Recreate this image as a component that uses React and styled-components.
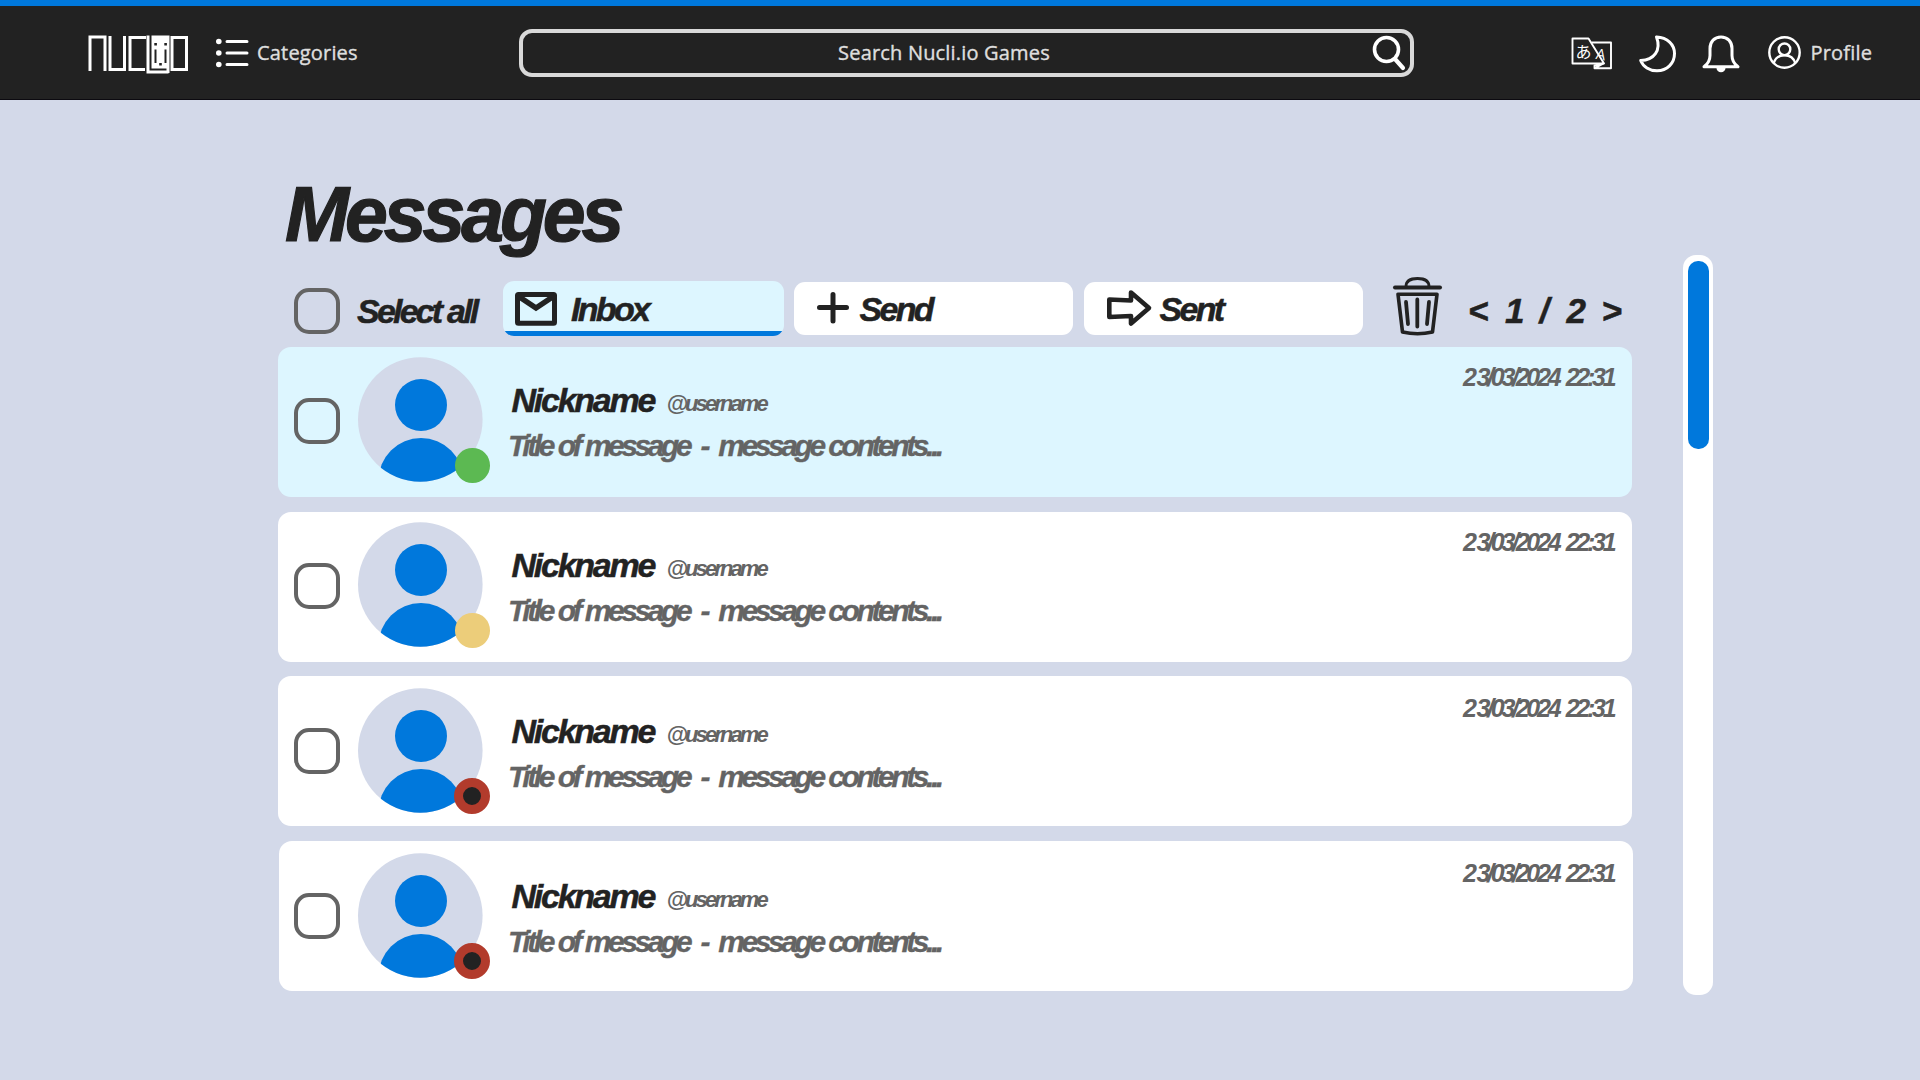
import React from "react";
import styled, { createGlobalStyle } from "styled-components";

const ink = "#222222";
const grey = "#646464";
const blue = "#0078dc";
const haze = "#d3d9e9";
const ice = "#ddf6ff";

const GlobalStyle = createGlobalStyle`
  * { box-sizing: border-box; }
  body { margin: 0; background: ${haze}; overflow: hidden; }
`;

const Page = styled.div`
  width: 1920px;
  height: 1080px;
  background: ${haze};
  font-family: "Liberation Sans", Arial, sans-serif;
  font-weight: 700;
  font-style: italic;
  color: ${ink};
`;

const Header = styled.header`
  height: 100px;
  border-top: 6px solid ${blue};
  border-bottom: 1px solid #0c0a10;
  background: ${ink};
  display: flex;
  align-items: flex-start;
  padding: 23px 0 0 88px;
  font-family: "Open Sans", "Noto Sans", sans-serif;
  font-weight: 500;
  font-style: normal;
  font-size: 20px;
  line-height: 48px;
  letter-spacing: 0.18px;
  -webkit-text-stroke: 0.4px #dedede;
  color: #dedede;
`;

const Icon = styled.svg`
  display: block;
  flex: none;
  overflow: visible;
  width: ${(p) => p.$w}px;
  height: ${(p) => p.$h}px;
  margin-top: ${(p) => p.$top || 0}px;
`;

const NavLink = styled.a`
  display: flex;
  gap: ${(p) => p.$gap}px;
  margin-left: ${(p) => p.$left}px;
  width: ${(p) => p.$w}px;
  white-space: nowrap;
`;

const SearchBox = styled.div`
  width: 895px;
  height: 48px;
  margin-left: 154px;
  border: 4px solid #d9d9d9;
  border-radius: 13px;
  display: flex;
  line-height: 40px;
`;

const SearchText = styled.span`
  flex: 1;
  text-align: center;
  padding-right: 8px;
`;

const HeaderTools = styled.div`
  display: flex;
  margin-left: 157px;
`;

const Body = styled.div`
  display: flex;
  padding-left: 278px;
`;

const Main = styled.main`
  width: 1355px;
`;

const Title = styled.h1`
  margin: 74px 0 0 7px;
  font-size: 77px;
  line-height: 80px;
  letter-spacing: -4.1px;
  -webkit-text-stroke: 1.2px ${ink};
`;

const Toolbar = styled.div`
  display: flex;
  align-items: flex-start;
  height: 71px;
  margin-top: 22px;
  padding-left: 16px;
  font-size: 34px;
  line-height: 36px;
  letter-spacing: -2.7px;
  -webkit-text-stroke: 0.5px ${ink};
  white-space: nowrap;
`;

const Checkbox = styled.span`
  flex: none;
  width: 46px;
  height: 46px;
  margin-top: ${(p) => p.$top}px;
  border: 4px solid ${grey};
  border-radius: 15px;
`;

const SelectLabel = styled.span`
  width: 146px;
  margin: 17px 0 0 17px;
  letter-spacing: -2.8px;
`;

const Tabs = styled.nav`
  display: grid;
  grid-template-columns: 281px 280px 279px;
  column-gap: 10px;
  align-items: start;
`;

const Tab = styled.div`
  display: flex;
  width: ${(p) => (p.$active ? 281 : 279)}px;
  margin-top: ${(p) => (p.$active ? 5 : 6)}px;
  height: ${(p) => (p.$active ? 55 : 53)}px;
  padding-left: ${(p) => p.$pad}px;
  padding-top: ${(p) => (p.$active ? 10 : 9)}px;
  gap: ${(p) => p.$gap}px;
  border-radius: 11px;
  background: ${(p) =>
    p.$active ? `linear-gradient(${ice} 50px, ${blue} 50px)` : "#fff"};
`;

const Pager = styled.div`
  display: grid;
  grid-template-columns: 37px 34.5px 27px 35px 20px;
  margin: 17px 0 0 26px;
  font-size: 35px;
  line-height: 36px;
  letter-spacing: 0;
`;

const List = styled.section`
  display: flex;
  flex-direction: column;
  gap: 14.67px;
`;

const Card = styled.article`
  display: flex;
  align-items: flex-start;
  width: 1354px;
  height: 150px;
  margin-left: ${(p) => p.$nudge}px;
  padding-left: ${(p) => 16 - p.$nudge}px;
  padding-right: ${(p) => p.$nudge}px;
  padding-top: ${(p) => p.$drop}px;
  border-radius: 13px;
  background: ${(p) => (p.$selected ? ice : "#fff")};
`;

const Avatar = styled.div`
  position: relative;
  flex: none;
  width: 125px;
  height: 125px;
  margin: 10px 0 0 18px;
`;

const Status = styled.span`
  position: absolute;
  left: ${(p) => (p.$busy ? 96.4 : 97)}px;
  top: ${(p) => (p.$busy ? 90 : 91)}px;
  width: ${(p) => (p.$busy ? 36 : 34.5)}px;
  height: ${(p) => (p.$busy ? 36 : 34.5)}px;
  border-radius: 50%;
  border: ${(p) => (p.$busy ? "9px solid #b23b2c" : "none")};
  background: ${(p) => p.$color};
`;

const Content = styled.div`
  flex: 1;
  padding: 35px 0 0 25px;
  white-space: pre;
`;

const NameRow = styled.div`
  display: flex;
  align-items: baseline;
  padding-left: 3.5px;
`;

const Nickname = styled.span`
  width: 155px;
  font-size: 34px;
  line-height: 36px;
  letter-spacing: -2.25px;
  -webkit-text-stroke: 0.5px ${ink};
`;

const Username = styled.span`
  font-size: 22px;
  line-height: 30px;
  letter-spacing: -2.9px;
  color: ${grey};
  position: relative;
  top: -1px;
`;

const Preview = styled.p`
  margin: 9px 0 0;
  font-size: 30px;
  line-height: 33px;
  letter-spacing: -3.42px;
  word-spacing: 0.7px;
  -webkit-text-stroke: 0.3px ${grey};
  color: ${grey};
`;

const Stamp = styled.time`
  width: 169px;
  padding-top: 17px;
  font-size: 25px;
  line-height: 26px;
  letter-spacing: -3.26px;
  color: ${grey};
  white-space: pre;
`;

const FirstDigit = styled.span`
  letter-spacing: -0.5px;
`;

const ScrollTrack = styled.div`
  width: 30px;
  height: 740px;
  margin: 155px 0 0 50px;
  padding: 5.5px 4.5px;
  border-radius: 13px;
  background: #fff;
`;

const ScrollThumb = styled.div`
  height: 188.5px;
  border-radius: 10px;
  background: ${blue};
`;

const Logo = () => (
  <Icon $w={100} $h={39} $top={6} viewBox="88 35 100 39" fill="none" stroke="#fff" strokeWidth="3">
    <path d="M90 71V37H105V71" />
    <path d="M110 36V69.5H124.500V36" />
    <path d="M146 37.500H130V69.500H145" />
    <path d="M148 35.500V72H168.500" />
    <path d="M151.500 35.500H169.500V73H166.500V68.500H151.500Z" fill="#fff" stroke="none" />
    <path d="M172 37.500H186.500V69.500H172Z" />
    <path d="M155.500 49.500V63M165.500 49.500V63" stroke="#222" strokeWidth="2" />
    <path d="M154.300 43h2.600v2.600h-2.600zM164.300 43h2.600v2.600h-2.600zM159.200 63h2.600v2.600h-2.600z" fill="#222" stroke="none" />
  </Icon>
);

const ListIcon = () => (
  <Icon $w={33} $h={30} $top={9} viewBox="216 38 33 30" stroke="#fff" strokeWidth="3" strokeLinecap="round">
    <path d="M227 41.500H247M227 53H247M227 64.500H247" />
    <g fill="#fff" stroke="none">
      <circle cx="218.800" cy="41.500" r="2.800" />
      <circle cx="218.800" cy="53" r="2.800" />
      <circle cx="218.800" cy="64.500" r="2.800" />
    </g>
  </Icon>
);

const SearchIcon = () => (
  <Icon $w={37} $h={36} $top={2} viewBox="1373 35 37 36" fill="none" stroke="#fff" strokeWidth="3.600" strokeLinecap="round">
    <circle cx="1386.500" cy="49.500" r="12" />
    <path d="M1395 59L1403 68" strokeWidth="4.200" />
  </Icon>
);

const KanaText = styled.text`
  font: 400 16px "Noto Sans CJK JP", sans-serif;
`;

const LatinText = styled.text`
  font: 500 15px "Open Sans", sans-serif;
`;

const TranslateIcon = () => (
  <Icon $w={41} $h={33} $top={8} viewBox="1571 37 41 33" fill="none" stroke="#fff" strokeWidth="1.900" strokeLinejoin="round">
    <path d="M1572.500 38.500H1588.500L1604 63.500H1572.500Z" />
    <path d="M1591.500 42.500H1611V68.300H1594.500V65.500L1603.500 63.500L1594.500 68.300" />
    <KanaText x="1575.500" y="57.500" fill="#fff" stroke="none">あ</KanaText>
    <LatinText x="1596" y="59.500" fill="#fff" stroke="none" transform="rotate(10 1600 55)">A</LatinText>
  </Icon>
);

const MoonIcon = () => (
  <Icon $w={38} $h={38} $top={6} viewBox="1639 34.500 38 38" fill="none" stroke="#fff" strokeWidth="3" strokeLinejoin="round">
    <path d="M1656.500 36.500C1667.500 37 1674.500 44 1674.500 53C1674.500 63 1667 70.300 1657 70.300C1649.500 70.300 1643 66 1640.700 60C1654 59.500 1661.500 50 1656.500 36.500Z" />
  </Icon>
);

const BellIcon = () => (
  <Icon $w={38} $h={38} $top={6} viewBox="1702.500 34.500 38 38" fill="none" stroke="#fff" strokeWidth="3" strokeLinejoin="round">
    <path d="M1704.500 66.300C1709 63 1710.500 60 1710.500 55V48C1710.500 41 1715 36.500 1721.500 36.500S1732.500 41 1732.500 48V55C1732.500 60 1734 63 1738.500 66.300Z" />
    <path d="M1717 67.500H1726C1726 70 1724 71.700 1721.500 71.700S1717 70 1717 67.500Z" fill="#fff" stroke="none" />
  </Icon>
);

const ProfileIcon = () => (
  <Icon $w={33} $h={33} $top={7} viewBox="1767.800 35.700 33 33" fill="none" stroke="#fff" strokeWidth="2.400">
    <circle cx="1784.300" cy="52.200" r="15.200" />
    <circle cx="1784.300" cy="49" r="5.800" />
    <path d="M1773.500 63C1775 57.500 1779 55 1784.300 55S1793.500 57.500 1795 63" />
  </Icon>
);

const MailIcon = () => (
  <Icon $w={42} $h={34} $top={1} viewBox="515 292 42 34" fill="none" stroke={ink} strokeWidth="5">
    <rect x="517.500" y="294.500" width="37" height="28.800" rx="1" />
    <path d="M518 296L536 308L554 296" strokeWidth="5.500" />
  </Icon>
);

const PlusIcon = () => (
  <Icon $w={32} $h={32} $top={1} viewBox="817 292 32 32" stroke={ink} strokeWidth="5" strokeLinecap="round">
    <path d="M819.500 307.500H846.500M833 294.500V321" />
  </Icon>
);

const ArrowIcon = () => (
  <Icon $w={45} $h={36} $top={-1.5} viewBox="1107 289.500 45 36" fill="none" stroke={ink} strokeWidth="4.600" strokeLinejoin="round">
    <path d="M1109.300 299L1131 300V292L1149 307.500L1131 323V315.500L1109.300 316.500Z" />
  </Icon>
);

const TrashBox = styled.span`
  margin: 0.5px 0 0 30px;
`;

const TrashIcon = () => (
  <Icon $w={49} $h={59} viewBox="1393 276.500 49 59" fill="none" stroke={ink} strokeLinecap="round" strokeLinejoin="round">
    <path d="M1395 287H1440" strokeWidth="4" />
    <path d="M1406 286C1406 280 1411 278 1417.500 278S1429 280 1429 286" strokeWidth="2.800" />
    <path d="M1398 293.800H1437L1432.500 331.500Q1417.500 335 1402.500 331.500Z" strokeWidth="3.600" />
    <path d="M1406 301.500L1408 323.500M1417.300 299V326M1429 301.500L1427 323.500" strokeWidth="3.800" />
  </Icon>
);

const Person = ({ id }) => (
  <Icon $w={125} $h={125} viewBox="0 0 125 125">
    <clipPath id={id}>
      <circle cx="62.300" cy="62.500" r="62.300" />
    </clipPath>
    <circle cx="62.300" cy="62.500" r="62.300" fill={haze} />
    <g fill={blue} clipPath={`url(#${id})`}>
      <circle cx="63" cy="48" r="26" />
      <circle cx="63" cy="123.500" r="42.500" />
    </g>
  </Icon>
);

const messages = [
  { status: "#5cb952", selected: true, drop: 0, nudge: 0 },
  { status: "#eccd7a", drop: 0.5, nudge: 0 },
  { status: ink, busy: true, drop: 1.3, nudge: 0 },
  { status: ink, busy: true, drop: 1.8, nudge: 1 },
];

const MessageCard = ({ message, id }) => (
  <Card $selected={message.selected} $drop={message.drop} $nudge={message.nudge}>
    <Checkbox $top={51 - message.drop / 2} />
    <Avatar>
      <Person id={id} />
      <Status $color={message.status} $busy={message.busy} />
    </Avatar>
    <Content>
      <NameRow>
        <Nickname>Nickname</Nickname>
        <Username>@username</Username>
      </NameRow>
      <Preview>{"Title of message  -  message contents..."}</Preview>
    </Content>
    <Stamp>
      <FirstDigit>2</FirstDigit>
      {"3/03/2024  22:31"}
    </Stamp>
  </Card>
);

export default function App() {
  return (
    <Page>
      <GlobalStyle />
      <Header>
        <Logo />
        <NavLink $left={28} $gap={8} $w={149}>
          <ListIcon />
          Categories
        </NavLink>
        <SearchBox>
          <SearchText>Search Nucli.io Games</SearchText>
          <SearchIcon />
        </SearchBox>
        <HeaderTools>
          <TranslateIcon />
          <NavLink $left={26.5} $w={38}><MoonIcon /></NavLink>
          <NavLink $left={25.5} $w={38}><BellIcon /></NavLink>
          <NavLink $left={27.5} $gap={10} $w={120}>
            <ProfileIcon />
            Profile
          </NavLink>
        </HeaderTools>
      </Header>
      <Body>
        <Main>
          <Title>Messages</Title>
          <Toolbar>
            <Checkbox $top={12} />
            <SelectLabel>Select all</SelectLabel>
            <Tabs>
              <Tab $active $pad={12} $gap={14}><MailIcon />Inbox</Tab>
              <Tab $pad={23} $gap={10.5}><PlusIcon />Send</Tab>
              <Tab $pad={23} $gap={7.5}><ArrowIcon />Sent</Tab>
            </Tabs>
            <TrashBox><TrashIcon /></TrashBox>
            <Pager>
              <span>&lt;</span>
              <span>1</span>
              <span>/</span>
              <span>2</span>
              <span>&gt;</span>
            </Pager>
          </Toolbar>
          <List>
            {messages.map((m, i) => (
              <MessageCard key={i} id={`avatar-${i}`} message={m} />
            ))}
          </List>
        </Main>
        <ScrollTrack>
          <ScrollThumb />
        </ScrollTrack>
      </Body>
    </Page>
  );
}
